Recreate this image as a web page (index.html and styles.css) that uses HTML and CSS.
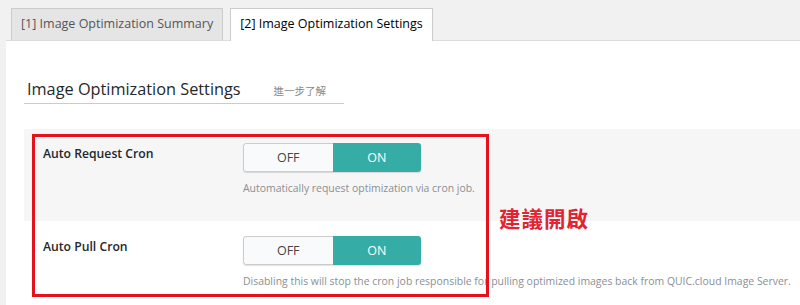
FILE: index.html
```html
<!DOCTYPE html>
<html lang="zh-Hant">
<head>
  <meta charset="UTF-8">
  <title>Image Optimization Settings</title>
  <link rel="stylesheet" href="styles.css">
</head>
<body>
  <div class="tabs">
    <a class="tab" href="#">[1] Image Optimization Summary</a>
    <a class="tab active" href="#">[2] Image Optimization Settings</a>
  </div>

  <div class="panel">
    <div class="section-title">
      <h3>Image Optimization Settings</h3>
      <a class="learn-more" href="#">進一步了解</a>
    </div>

    <div class="settings">
      <div class="setting-row shaded">
        <div class="setting-label">Auto Request Cron</div>
        <div class="setting-field">
          <div class="switch">
            <span class="switch-off">OFF</span>
            <span class="switch-on">ON</span>
          </div>
          <p class="desc">Automatically request optimization via cron job.</p>
        </div>
      </div>
      <div class="setting-row">
        <div class="setting-label">Auto Pull Cron</div>
        <div class="setting-field">
          <div class="switch">
            <span class="switch-off">OFF</span>
            <span class="switch-on">ON</span>
          </div>
          <p class="desc">Disabling this will stop the cron job responsible for pulling optimized images back from QUIC.cloud Image Server.</p>
        </div>
      </div>

      <!-- annotation -->
      <div class="mark-box"></div>
      <div class="mark-note">建議開啟</div>
    </div>
  </div>
</body>
</html>
```

FILE: styles.css
```css
* {
  box-sizing: border-box;
}
body {
  margin: 0;
  background: #f1f1f1;
  font-family: 'Open Sans', 'Noto Sans CJK TC', sans-serif;
  color: #23282d;
  height: 305px;
  overflow: hidden;
}
.tabs {
  display: flex;
  gap: 7px;
  padding: 8px 0 0 11px;
  height: 40px;
}
.tab {
  display: block;
  height: 32px;
  line-height: 30px;
  padding: 0 9px;
  font-size: 12.5px;
  color: #555;
  text-decoration: none;
  background: #e5e5e5;
  border: 1px solid #ccc;
  border-bottom: none;
}
.tab.active {
  background: #fff;
  color: #000;
  height: 33px;
  position: relative;
  z-index: 1;
}
.panel {
  background: #fff;
  margin-left: 6px;
  border-top: 1px solid #ddd;
  padding: 37px 0 0 18px;
  min-height: 265px;
}
.section-title {
  display: flex;
  align-items: baseline;
  width: 320px;
  padding: 0 3px 3px;
  border-bottom: 1px solid #ccc;
}
.section-title h3 {
  margin: 0;
  font-size: 16.3px;
  font-weight: 400;
  color: #23282d;
}
.learn-more {
  margin-left: 33px;
  font-size: 10.5px;
  color: #888;
  text-decoration: none;
}
.settings {
  position: relative;
  margin-top: 25px;
}
.setting-row {
  display: flex;
  padding: 14px 0 0 19px;
  height: 92px;
}
.setting-row + .setting-row {
  padding-top: 15px;
}
.setting-row.shaded {
  background: #f6f6f6;
}
.setting-label {
  width: 200px;
  flex-shrink: 0;
  font-size: 12.2px;
  font-weight: 600;
  line-height: 18px;
  padding-top: 2px;
  color: #23282d;
}
.switch {
  display: flex;
  width: 178px;
  height: 29px;
  border-radius: 3px;
  overflow: hidden;
  box-shadow: 0 1px 1px rgba(0,0,0,0.12);
}
.switch span {
  flex: 1;
  display: flex;
  align-items: center;
  justify-content: center;
  font-size: 12.5px;
}
.switch-off {
  background: #f9fafb;
  color: #444;
  border: 1px solid #ccc;
  border-right: none;
  border-radius: 3px 0 0 3px;
}
.switch-on {
  background: #36aca6;
  color: #fff;
}
.desc {
  margin: 9px 0 0;
  font-size: 10.45px;
  color: #8a8f94;
  white-space: nowrap;
}
.mark-box {
  position: absolute;
  left: 8px;
  top: 5px;
  width: 457px;
  height: 163px;
  border: 3px solid #e3121d;
}
.mark-note {
  position: absolute;
  left: 475px;
  top: 73px;
  font-size: 21.5px;
  font-weight: 700;
  color: #e02433;
  letter-spacing: 1px;
}
```
